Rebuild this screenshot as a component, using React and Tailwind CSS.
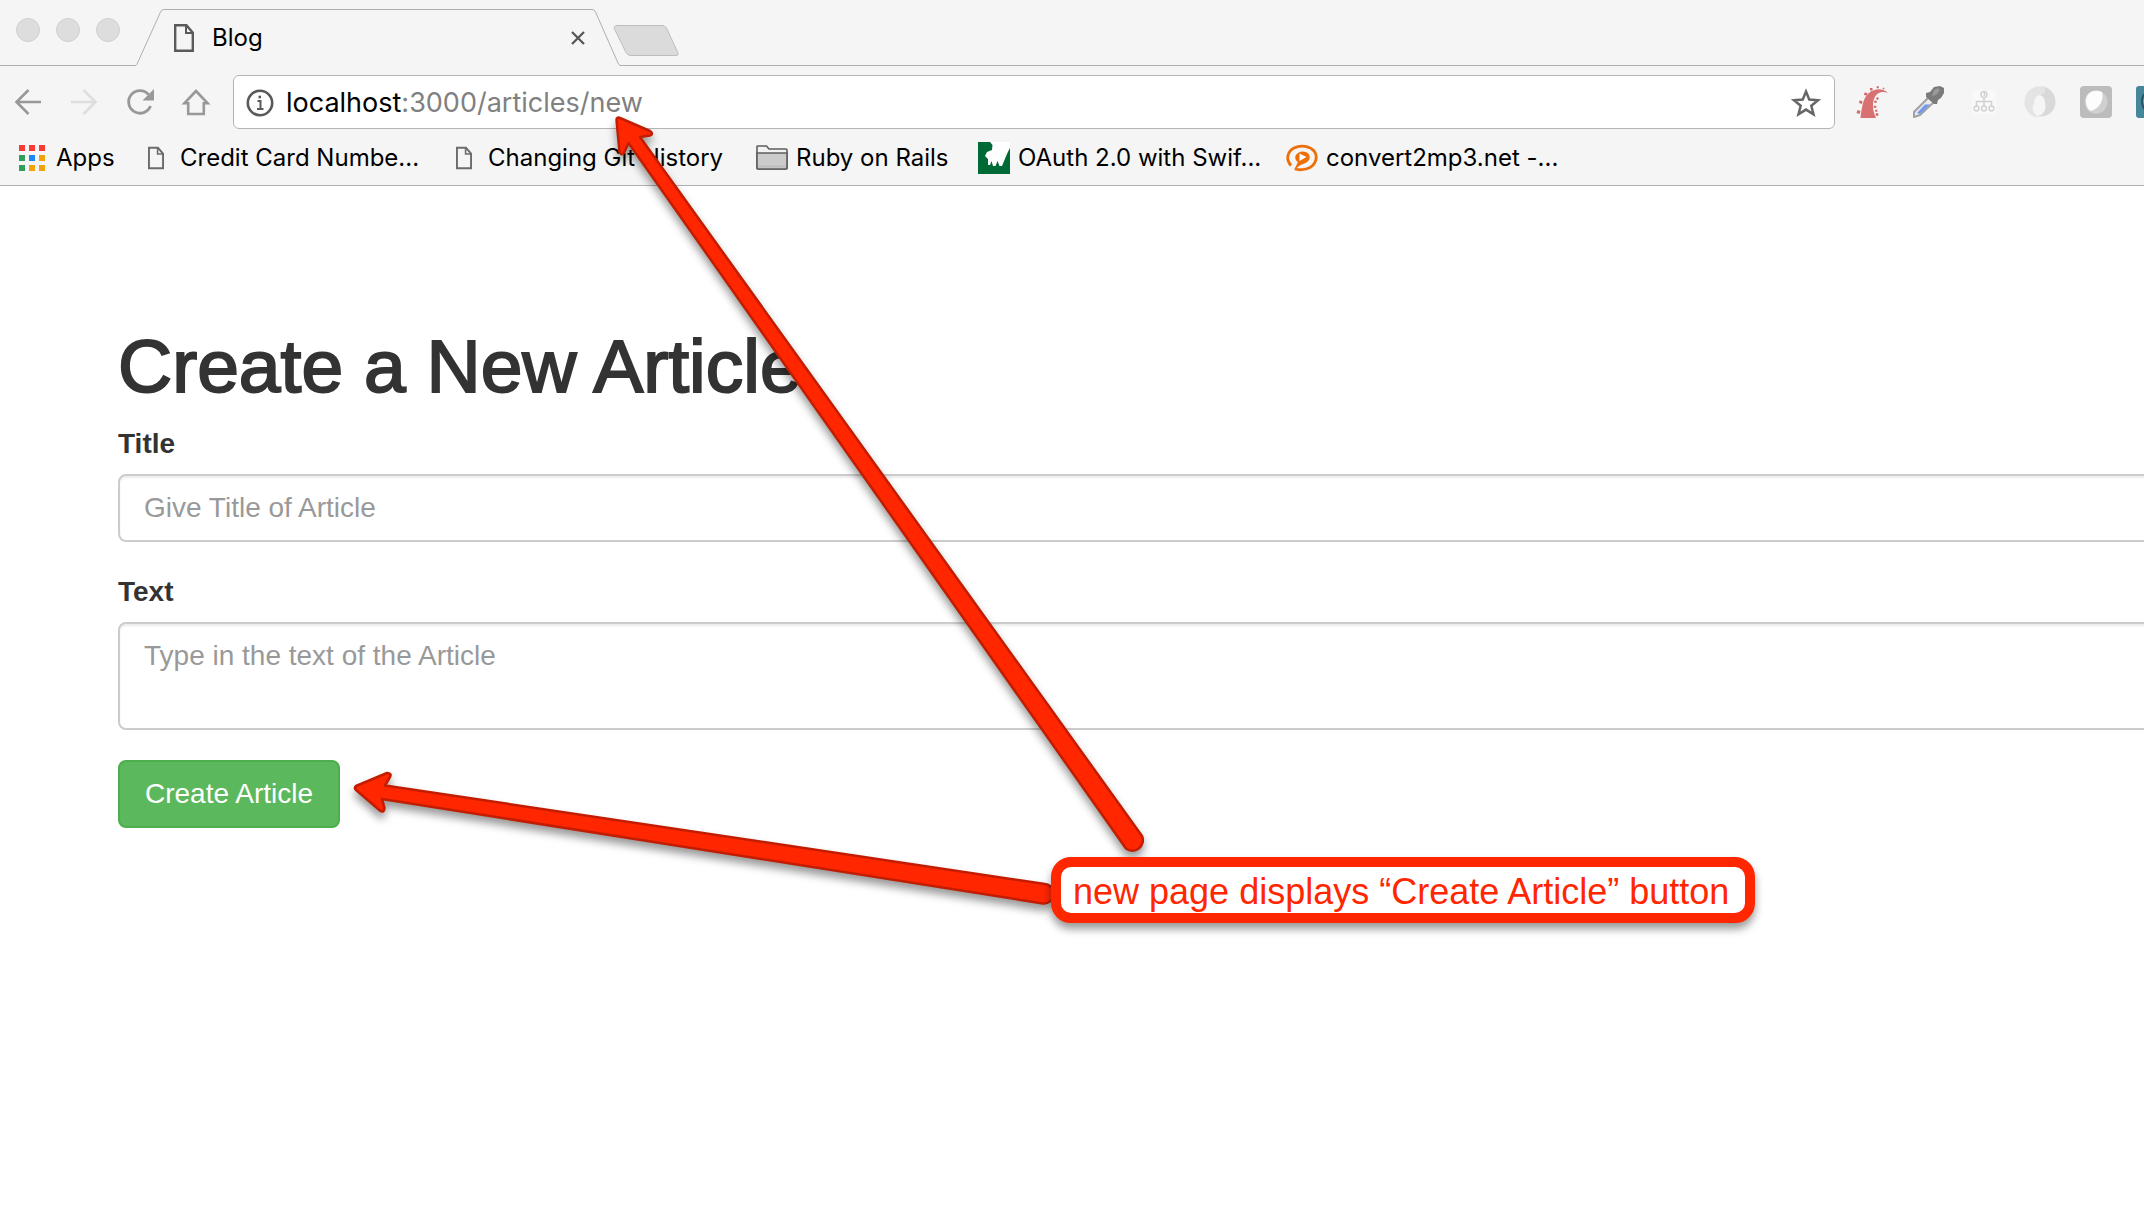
const iconButton = "flex size-8 shrink-0 items-center justify-center";

function PageIcon({ className, color }) {
  return (
    <svg viewBox="0 0 20 28" className={className} fill="none" stroke={color} strokeWidth="2.4">
      <path d="M1.2 1.2H12.4L18.8 8.6V26.8H1.2Z" />
      <path d="M12 1.2V9H18.8" strokeWidth="2" />
    </svg>
  );
}

function TabStrip() {
  return (
    <div className="flex h-[66px]">
      <div className="flex w-[136px] gap-4 border-b border-[#b0b0b0] pt-[18px] pl-4">
        <button aria-label="Close window" className="size-6 rounded-full border border-[#cfcfcf] bg-[#dddddd]" />
        <button aria-label="Minimize window" className="size-6 rounded-full border border-[#cfcfcf] bg-[#dddddd]" />
        <button aria-label="Zoom window" className="size-6 rounded-full border border-[#cfcfcf] bg-[#dddddd]" />
      </div>
      <div className="relative flex w-[484px] items-center pt-2.5 pr-[34px] pl-[38px]">
        <svg className="absolute inset-0 size-full" viewBox="0 0 484 66" preserveAspectRatio="none" fill="none" stroke="#b0b0b0">
          <path d="M0 65.5Q1 65 1.500 63L24.500 12Q25.500 9.500 28 9.500H456Q458.500 9.500 459.500 12L482 63Q483 65 484 65.500" />
        </svg>
        <PageIcon className="h-7 w-5" color="#5a5a5a" />
        <span className="ml-[18px] flex-1 font-[Inter,sans-serif] text-2xl text-black">Blog</span>
        <button aria-label="Close tab" className="flex size-4 items-center justify-center">
          <svg viewBox="0 0 16 16" className="size-4" stroke="#555" strokeWidth="2.2">
            <path d="M2 2L14 14M14 2L2 14" />
          </svg>
        </button>
      </div>
      <div className="flex-1 border-b border-[#b0b0b0]">
        <button aria-label="New tab" className="mt-6 block -ml-2">
          <svg viewBox="0 0 68 33" className="h-[33px] w-[68px]" fill="#dbdbdb" stroke="#bdbdbd">
            <path d="M5 1.500H50Q53 1.500 54.500 4L66 29Q67 31.500 64 31.500H19Q15.500 31.500 14 28.500L2.500 5Q1.500 2 5 1.500Z" />
          </svg>
        </button>
      </div>
    </div>
  );
}

function Extensions() {
  return (
    <div className="-mr-6 ml-[21px] flex shrink-0 gap-6">
      <button aria-label="Tentacle extension" className={iconButton}>
        <svg viewBox="0 0 32 32" className="size-8">
          <path d="M4.500 32C6 20 7 12 13 7C19 2 27 2 32 7C26 4.500 20 7 18 13C16 19 17 25 20 32Z" fill="#d87171" />
          <g fill="#d46a6a">
            <path d="M1.500 24l3 1-1 3-3-1zM3.500 14.500l3 .5-.5 3-3-1zM8.500 6.500l3 .5-.5 2.500-3-.5zM14 2l2.500 0 0 2.500-2.500 0zM21 0l2 .5-.5 2-2-.5zM27 1.500l1.500.5-.5 1.500-1.500-.5z" />
            <path d="M21 11l2 1-1 2-2-1zM18.500 14.500l2.500.5-.5 2-2.500-.5zM18 19.500l2.500.5-.5 2-2.500-.5zM19 24l2-.5.5 2-2 .5zM20 27l2.500.5-.5 2.500-2.500-.5z" />
          </g>
        </svg>
      </button>
      <button aria-label="Color picker" className={iconButton}>
        <svg viewBox="0 0 32 32" className="size-8">
          <path d="M2 26L17 11L22 16L8 29L2 31Z" fill="#e9e9ee" stroke="#a2a2a2" strokeWidth="2" />
          <path d="M5 27L13 18.500H18L8 28Z" fill="#7396ee" />
          <path d="M14 7L18 6L22 1L28 0L32 2L32 7L29 12L26 14L25 18L22 18L14 11Z" fill="#7b7b7b" />
          <path d="M22 4L26 2L28 4L24 9L20 10Z" fill="#999" />
        </svg>
      </button>
      <button aria-label="Site map" className={iconButton}>
        <svg viewBox="0 0 32 32" className="size-8" fill="none" stroke="#d2d2d2" strokeWidth="1.500">
          <rect x="4" y="4" width="24" height="24" rx="3" fill="#f9f9f9" stroke="none" />
          <circle cx="16" cy="8.500" r="3" />
          <path d="M16 11.500V20M8.500 20V15.500H23.500V20M15.500 7.500L16.500 7V10" />
          <circle cx="8.500" cy="22.500" r="2.400" />
          <circle cx="16" cy="22.500" r="2.400" />
          <circle cx="23.500" cy="22.500" r="2.400" />
        </svg>
      </button>
      <button aria-label="JSON viewer" className={iconButton}>
        <svg viewBox="0 0 32 32" className="size-8">
          <path d="M20 0.500C9 -1.500 0 6 0.500 17C1 26 8 31.500 15 31.500C9 28 7 22 10 17C10.500 11 14 8 19 9C22 5 22 2 20 0.500Z" fill="#e4e4e4" />
          <path d="M20 0.500C27 2.500 32 9 31.500 17C31 26 22 32.500 13 30C18 30 23 25 21 17C20.500 13 18 10 14 10.500C20 8 23 5 20 0.500Z" fill="#d9d9d9" />
          <ellipse cx="16" cy="16.500" rx="5" ry="7" fill="#f5f5f5" />
        </svg>
      </button>
      <button aria-label="Shield extension" className={iconButton}>
        <svg viewBox="0 0 32 32" className="size-8">
          <rect width="32" height="32" rx="4" fill="#bcbcbc" />
          <circle cx="16" cy="16" r="11.500" fill="#d0d0d0" />
          <path d="M6 14C7 6 14 3 22 6C24 14 20 22 11 25C7 23 6 19 6 14Z" fill="#fdfdfd" />
        </svg>
      </button>
      <button aria-label="Teal extension" className={iconButton}>
        <svg viewBox="0 0 32 32" className="size-8">
          <rect width="32" height="32" rx="3" fill="#46869a" />
          <path d="M12 7Q6 8 6 15Q6 22 10 24" fill="none" stroke="#2c5362" strokeWidth="2" />
          <path d="M14 9Q9 10 8.500 15Q8.500 20 12 22" fill="none" stroke="#a9c4cc" strokeWidth="2" />
        </svg>
      </button>
    </div>
  );
}

function Toolbar() {
  return (
    <div className="flex items-center overflow-hidden pt-[9px]">
      <div className="flex shrink-0 gap-6 pr-[21px] pl-3">
        <button aria-label="Back" className={iconButton}>
          <svg viewBox="0 0 32 32" className="size-8" fill="none" stroke="#989898" strokeWidth="2.600">
            <path d="M29 16H5M16.500 4L4.500 16L16.500 28" />
          </svg>
        </button>
        <button aria-label="Forward" className={iconButton}>
          <svg viewBox="0 0 32 32" className="size-8" fill="none" stroke="#dedede" strokeWidth="2.600">
            <path d="M3 16H27M15.500 4L27.500 16L15.500 28" />
          </svg>
        </button>
        <button aria-label="Reload" className={iconButton}>
          <svg viewBox="0 0 32 32" className="size-8" fill="none" stroke="#989898" strokeWidth="2.800">
            <path d="M26.500 20A11.300 11.300 0 1 1 24.500 8.500" />
            <path d="M30 3V14.500H18.500Z" fill="#989898" stroke="none" />
          </svg>
        </button>
        <button aria-label="Home" className={iconButton}>
          <svg viewBox="0 0 32 32" className="size-8" fill="none" stroke="#989898" strokeWidth="2.600">
            <path d="M16 5L4.500 17.200H8.200V28H23.800V17.200H27.500Z" />
          </svg>
        </button>
      </div>
      <div className="flex h-[54px] min-w-0 flex-1 items-center rounded-md border border-[#b4b4b4] bg-white pt-0.5 pr-3 pl-3">
        <svg viewBox="0 0 28 28" className="size-7 shrink-0" fill="none" stroke="#5a5a5a" strokeWidth="2.600">
          <circle cx="14" cy="14" r="12.200" />
          <path d="M11.500 12H14.500V20M11 20H17.500" strokeWidth="2" />
          <path d="M12.500 8H15" strokeWidth="2.600" />
        </svg>
        <a href="#new" className="ml-3 flex-1 font-[Inter,sans-serif] text-[27px] whitespace-nowrap text-[#808080]">
          <span className="text-black">localhost</span>:3000/articles/new
        </a>
        <button aria-label="Bookmark this page" className={iconButton}>
          <svg viewBox="0 0 32 32" className="size-8" fill="none" stroke="#666" strokeWidth="2.500">
            <path d="M16 4.500L19.300 12.600L28 13.200L21.300 18.800L23.500 27.300L16 22.600L8.500 27.300L10.700 18.800L4 13.200L12.700 12.600Z" />
          </svg>
        </button>
      </div>
      <Extensions />
    </div>
  );
}

function AppsIcon() {
  return (
    <svg viewBox="0 0 32 32" className="size-8">
      <path d="M3 3h6v6H3zM13 3h6v6h-6zM23 3h6v6h-6z" fill="#f53b35" />
      <path d="M3 13h6v6H3zM3 23h6v6H3z" fill="#2f9f5b" />
      <path d="M13 13h6v6h-6z" fill="#1b87f5" />
      <path d="M23 13h6v6h-6zM13 23h6v6h-6zM23 23h6v6h-6z" fill="#f0a30a" />
    </svg>
  );
}

function FolderIcon() {
  return (
    <svg viewBox="0 0 32 32" className="size-8" stroke="#5e5e5e" strokeWidth="1.600">
      <path d="M1 26V4.500Q1 4 2 4H10.500L13 7H30Q31 7 31 8V26Q31 27 30 27H2Q1 27 1 26Z" fill="#f2f2f2" />
      <path d="M1 11H31V26Q31 27 30 27H2Q1 27 1 26Z" fill="#cbcbcb" />
      <path d="M2 24.500H30" stroke="#bcbcbc" />
    </svg>
  );
}

function TutorialIcon() {
  return (
    <svg viewBox="0 0 32 32" className="size-8">
      <rect width="32" height="32" fill="#006a37" />
      <path d="M12 0H32V6C29 11 27 17 24 24L21.500 24L19.500 19L17.500 24L15 24L13.500 19L12 23L10 23L10 17L7 14L9 10L14 8L14.500 3Z" fill="#fff" />
    </svg>
  );
}

function ConvertIcon() {
  return (
    <svg viewBox="0 0 32 32" className="size-8" fill="none" stroke="#ee6f08">
      <path d="M5 23.500C-1 17 2 9 8 6C15 2.500 24 4 28.500 9.500C33 17 28 25 20 27C16 28 12.500 28 9 27" strokeWidth="2.800" />
      <path d="M8 28L12 20C7 17 9 10.500 16 9.500C23 9.500 25 14 23 18C21 21 17 22 14.500 23Z" fill="#ee6f08" stroke="none" />
      <path d="M13.500 11.500V19L20.500 15Z" fill="#fff" stroke="none" />
    </svg>
  );
}

const bookmarks = [
  { label: "Apps", icon: <AppsIcon />, width: "w-[98px]" },
  { label: "Credit Card Numbe...", icon: <PageIcon className="h-6 w-4" color="#6b6b6b" />, width: "w-[282px]" },
  { label: "Changing Git History", icon: <PageIcon className="h-6 w-4" color="#6b6b6b" />, width: "w-[282px]" },
  { label: "Ruby on Rails", icon: <FolderIcon />, width: "w-[196px]" },
  { label: "OAuth 2.0 with Swif...", icon: <TutorialIcon />, width: "w-[282px]" },
  { label: "convert2mp3.net -...", icon: <ConvertIcon />, width: "w-[282px]" },
];

function BookmarksBar() {
  return (
    <nav className="flex h-[57px] items-center gap-[26px] overflow-hidden border-b border-[#b0b0b0] pt-0.5 pl-4">
      {bookmarks.map((b) => (
        <a key={b.label} href="#bookmark" className={`flex shrink-0 items-center gap-2 ${b.width}`}>
          <span className="flex size-8 shrink-0 items-center justify-center">{b.icon}</span>
          <span className="font-[Inter,sans-serif] text-2xl whitespace-nowrap text-black">{b.label}</span>
        </a>
      ))}
    </nav>
  );
}

const label = "block text-[28px] leading-10 font-bold";
const field =
  "mt-2.5 block w-full rounded-lg border-2 border-[#cccccc] bg-white px-6 text-[28px] leading-10 shadow-[inset_0_2px_2px_rgba(0,0,0,0.075)] placeholder:text-[#999999]";

function ArticleForm() {
  return (
    <main className="overflow-hidden pt-[141px] pl-[118px] font-['Liberation_Sans',Arial,sans-serif] text-[#333333]">
      <h1 className="mb-[18px] text-[75px] leading-[79px] [-webkit-text-stroke:2px_#333333]">Create a New Article</h1>
      <form className="-mr-4 pb-10">
        <label htmlFor="title" className={label}>Title</label>
        <input id="title" type="text" placeholder="Give Title of Article" className={`h-[68px] ${field}`} />
        <label htmlFor="text" className={`mt-[30px] ${label}`}>Text</label>
        <textarea id="text" placeholder="Type in the text of the Article" className={`h-[108px] resize-none py-3 ${field}`} />
        <button
          type="button"
          className="mt-[30px] h-[68px] min-w-[222px] rounded-lg border-2 border-[#4cae4c] bg-[#5cb85c] px-6 text-[28px] leading-10 text-white"
        >
          Create Article
        </button>
      </form>
    </main>
  );
}

function Annotations() {
  return (
    <div className="pointer-events-none absolute inset-0 overflow-hidden">
      <svg
        className="absolute inset-0 size-full drop-shadow-[0_6px_4px_rgba(0,0,0,0.4)]"
        fill="#ff2600"
        stroke="#c21d00"
        strokeWidth="2.500"
        strokeLinejoin="round"
      >
        <path d="M616.500 120Q616.500 116.500 620 118L650 131Q654 134 650 135.500L640 137L1142 836A10.500 10.500 0 0 1 1126 848.500L628.500 143L624 153Q621.500 156 619.500 152Z" />
        <path d="M356 786L387 773Q392 773 390 777L385 785.500L1045 884A9.800 9.800 0 0 1 1043 903.500L382 799L384.500 808Q384 813 380.500 811L356 790Q354 788 356 786Z" />
      </svg>
      <p className="absolute top-[857px] left-[1051px] rounded-[20px] border-10 border-[#ff2600] bg-white pt-1 pr-4 pl-3 font-['Liberation_Sans',Arial,sans-serif] text-[36px] leading-[42px] whitespace-nowrap text-[#ff2600] shadow-[0_6px_8px_rgba(0,0,0,0.4)]">
        new page displays “Create Article” button
      </p>
    </div>
  );
}

export default function App() {
  return (
    <div className="relative min-h-screen overflow-hidden bg-white">
      <header className="bg-[#f5f5f5]">
        <TabStrip />
        <Toolbar />
        <BookmarksBar />
      </header>
      <ArticleForm />
      <Annotations />
    </div>
  );
}
